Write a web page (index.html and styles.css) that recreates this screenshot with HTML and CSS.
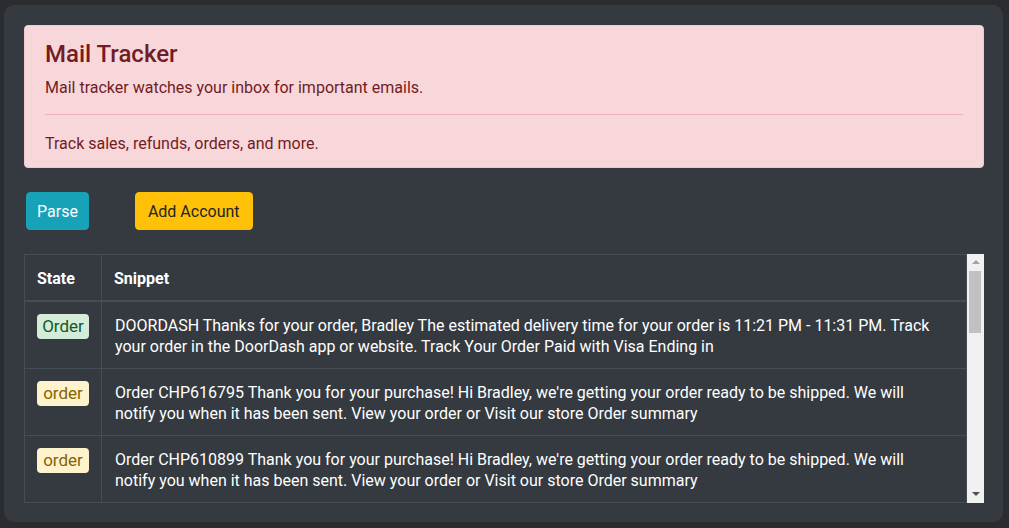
FILE: index.html
```html
<!DOCTYPE html>
<html>
<head>
<meta charset="utf-8">
<title>Mail Tracker</title>
<link rel="stylesheet" href="styles.css">
</head>
<body>
<main class="card">
  <section class="alert">
    <h4 class="alert-heading">Mail Tracker</h4>
    <p class="alert-text">Mail tracker watches your inbox for important emails.</p>
    <hr class="alert-rule">
    <p class="alert-text">Track sales, refunds, orders, and more.</p>
  </section>

  <div class="actions">
    <button class="btn btn-info">Parse</button>
    <button class="btn btn-warning">Add Account</button>
  </div>

  <div class="table-area">
    <div class="table-wrap">
      <table class="mail-table">
        <thead>
          <tr><th class="col-state">State</th><th>Snippet</th></tr>
        </thead>
        <tbody>
          <tr>
            <td class="col-state"><span class="badge badge-green">Order</span></td>
            <td class="snippet">DOORDASH Thanks for your order, Bradley The estimated delivery time for your order is 11:21 PM - 11:31 PM. Track your order in the DoorDash app or website. Track Your Order Paid with Visa Ending in</td>
          </tr>
          <tr>
            <td class="col-state"><span class="badge badge-yellow">order</span></td>
            <td class="snippet">Order CHP616795 Thank you for your purchase! Hi Bradley, we're getting your order ready to be shipped. We will notify you when it has been sent. View your order or Visit our store Order summary</td>
          </tr>
          <tr>
            <td class="col-state"><span class="badge badge-yellow">order</span></td>
            <td class="snippet">Order CHP610899 Thank you for your purchase! Hi Bradley, we're getting your order ready to be shipped. We will notify you when it has been sent. View your order or Visit our store Order summary</td>
          </tr>
        </tbody>
      </table>
    </div>
    <div class="scrollbar" aria-hidden="true">
      <div class="scroll-btn">
        <svg width="8" height="4" viewBox="0 0 8 4"><polygon points="0,4 8,4 4,0" fill="#a3a3a3"/></svg>
      </div>
      <div class="scroll-track">
        <div class="scroll-thumb"></div>
      </div>
      <div class="scroll-btn">
        <svg width="8" height="4" viewBox="0 0 8 4"><polygon points="0,0 8,0 4,4" fill="#505050"/></svg>
      </div>
    </div>
  </div>
</main>
</body>
</html>
```
FILE: styles.css
```css
* { box-sizing: border-box; }

body {
  margin: 0;
  padding: 5px 6px 6px 4px;
  background: #2b2c2f;
  font-family: Roboto, "Liberation Sans", Arial, sans-serif;
  font-size: 16px;
  line-height: 1.5;
  color: #fff;
}

.card {
  background: #343a40;
  border-radius: 10px;
  padding: 20px 19px 19px 20px;
  height: 517px;
}

/* Alert */
.alert {
  background: #f8d7da;
  border: 1px solid #f5c6cb;
  border-radius: 4px;
  color: #721c24;
  padding: 14px 20px 11px;
}

.alert-heading {
  margin: 0 0 7px;
  font-size: 24px;
  font-weight: 500;
  line-height: 1.2;
  color: #721c24;
}

.alert-text {
  margin: 0;
  line-height: 24px;
}

.alert-rule {
  margin: 14px 0 17px;
  border: 0;
  border-top: 1px solid #f1b0b7;
  height: 0;
}

/* Buttons */
.actions {
  display: flex;
  gap: 46px;
  padding-left: 2px;
  margin-top: 24px;
}

.btn {
  font-family: inherit;
  font-size: 16px;
  line-height: 24px;
  padding: 7px 12px 5px;
  border: 1px solid transparent;
  border-radius: 4px;
  cursor: pointer;
}

.btn-info {
  background: #17a2b8;
  border-color: #17a2b8;
  color: #fff;
  padding-left: 10px;
  padding-right: 10px;
}

.btn-warning {
  background: #ffc107;
  border-color: #ffc107;
  color: #212529;
}

/* Table */
.table-area {
  display: flex;
  margin-top: 24px;
}

.table-wrap {
  flex: 1;
  min-width: 0;
}

.mail-table {
  width: 100%;
  border-collapse: collapse;
  background: #343a40;
  color: #fff;
  line-height: 21px;
}

.mail-table th,
.mail-table td {
  border: 1px solid #454d55;
  padding: 12px;
  text-align: left;
  vertical-align: top;
}

.mail-table th {
  font-weight: 700;
  padding-top: 13px;
  padding-bottom: 11px;
  border-bottom: 2px solid #454d55;
}

.mail-table td.snippet {
  padding: 13px 28px 11px 13px;
}

.col-state { width: 1px; white-space: nowrap; }

.badge {
  display: inline-block;
  vertical-align: top;
  min-width: 52px;
  text-align: center;
  font-size: 17px;
  line-height: 19px;
  padding: 3px 5px;
  border-radius: 4px;
}

.badge-green {
  background: #d4edda;
  color: #155724;
}

.badge-yellow {
  background: #fff3cd;
  color: #856404;
}

/* Scrollbar */
.scrollbar {
  width: 17px;
  flex: none;
  display: flex;
  flex-direction: column;
  background: #f1f1f1;
}

.scroll-btn {
  height: 17px;
  display: flex;
  align-items: center;
  justify-content: center;
}

.scroll-btn svg { display: block; }

.scroll-track {
  flex: 1;
  padding: 0 3px 0 2px;
}

.scroll-thumb {
  height: 62px;
  background: #c1c1c1;
}
```
